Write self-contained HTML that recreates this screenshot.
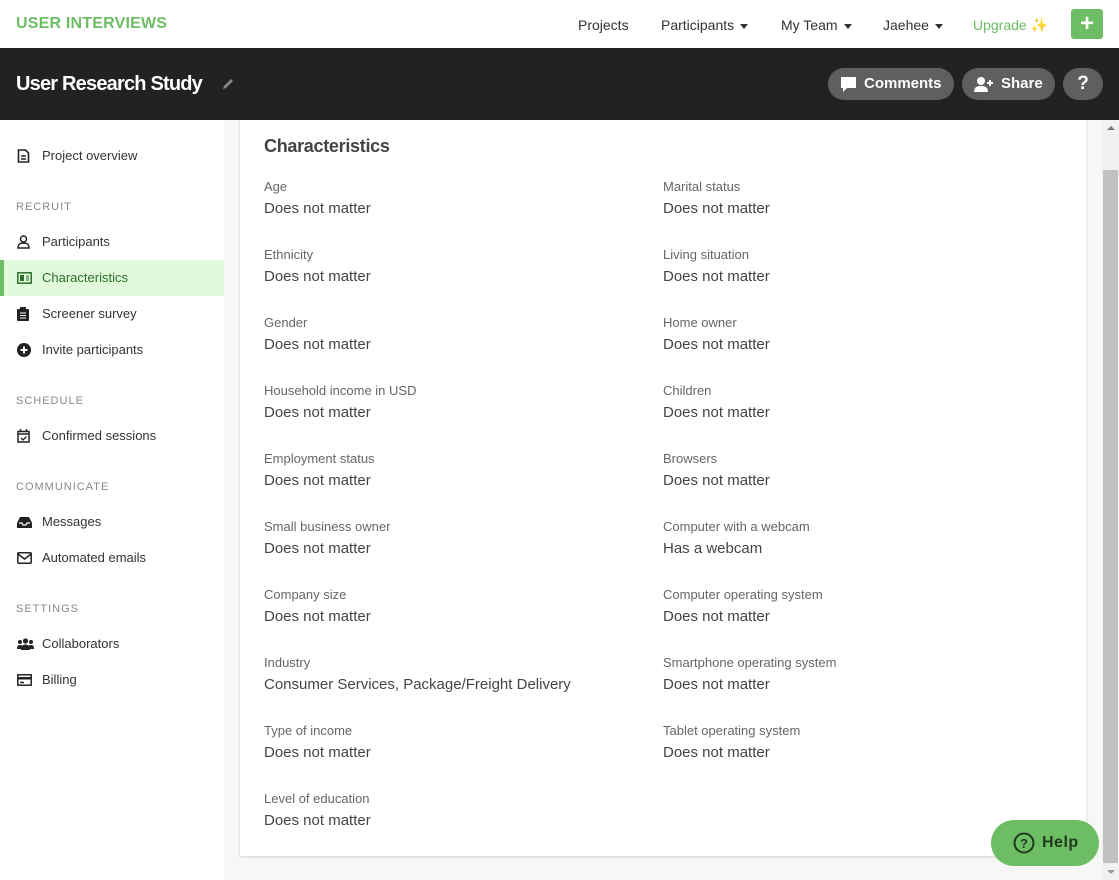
<!DOCTYPE html>
<html><head><meta charset="utf-8"><style>
*{margin:0;padding:0;box-sizing:border-box}
body{width:1119px;height:880px;overflow:hidden;background:#f7f7f7;font-family:"Liberation Sans",sans-serif;position:relative;color:#333}
.a{position:absolute;white-space:nowrap}
#top{position:absolute;left:0;top:0;width:1119px;height:48px;background:#fff}
#bar{position:absolute;left:0;top:48px;width:1119px;height:72px;background:#222}
#side{position:absolute;left:0;top:120px;width:224px;height:760px;background:#fff}
.nav{font-size:14px;color:#333;top:17px}
.caret{display:inline-block;width:0;height:0;border-left:4px solid transparent;border-right:4px solid transparent;border-top:5px solid #333;vertical-align:middle;margin-left:6px}
.btn{position:absolute;top:68px;height:32px;border-radius:16px;background:#5f5f5f;color:#fff;font-weight:bold;font-size:15px;line-height:32px}
.si{font-size:13px;color:#333;left:42px}
.sh{font-size:11px;color:#888;letter-spacing:1px;left:16px}
.ic{position:absolute;left:17px}
#card{position:absolute;left:240px;top:100px;width:846px;height:756px;background:#fff;box-shadow:0 1px 3px rgba(0,0,0,.15)}
.l{font-size:13px;color:#666}
.v{font-size:15px;color:#444}
</style></head><body>
<div id="card"></div>
<div id="top"></div>
<div class="a" style="left:16px;top:15px;font-size:16px;font-weight:bold;color:#6cbd64;letter-spacing:.2px">USER INTERVIEWS</div>
<div class="a nav" style="left:578px">Projects</div>
<div class="a nav" style="left:661px">Participants<span class="caret"></span></div>
<div class="a nav" style="left:781px">My Team<span class="caret"></span></div>
<div class="a nav" style="left:883px">Jaehee<span class="caret"></span></div>
<div class="a nav" style="left:973px;color:#6cbd64">Upgrade <span style="color:#e6c000">✨</span></div>
<div class="a" style="left:1071px;top:9px;width:32px;height:30px;background:#6cbd64;border-radius:3px;color:#fff;font-size:24px;font-weight:bold;text-align:center;line-height:29px">+</div>

<div id="bar"></div>
<div class="a" style="left:16px;top:73px;font-size:20px;font-weight:bold;color:#fff;letter-spacing:-.8px">User Research Study</div>
<svg class="a" style="left:221px;top:77px" width="14" height="14" viewBox="0 0 14 14"><path d="M2 12l1-3 7-7 2 2-7 7z" fill="#888"/></svg>
<div class="btn" style="left:828px;width:126px"><svg style="position:absolute;left:12px;top:8px" width="17" height="17" viewBox="0 0 17 17"><path d="M1 1h15v11H7l-4 4v-4H1z" fill="#fff"/></svg><span style="position:absolute;left:36px">Comments</span></div>
<div class="btn" style="left:962px;width:93px"><svg style="position:absolute;left:12px;top:8px" width="20" height="17" viewBox="0 0 20 17"><circle cx="7" cy="5" r="4" fill="#fff"/><path d="M0 16c0-5 3-6 7-6s7 1 7 6z" fill="#fff"/><path d="M16 4v6M13 7h6" stroke="#fff" stroke-width="2"/></svg><span style="position:absolute;left:39px">Share</span></div>
<div class="btn" style="left:1063px;width:40px;text-align:center;font-size:19px">?</div>

<div id="side"></div>
<div class="a" style="left:0;top:260px;width:224px;height:36px;background:#e0fadb;border-left:4px solid #6cbd64"></div>
<svg class="ic" style="top:149px" width="13" height="14" viewBox="0 0 13 14"><path d="M1.5 1h7l3 3v9h-10z" fill="none" stroke="#222" stroke-width="1.6"/><path d="M4 7h5M4 10h5" stroke="#222" stroke-width="1.4"/></svg>
<div class="a si" style="top:148px">Project overview</div>
<div class="a sh" style="top:201px">RECRUIT</div>
<svg class="ic" style="top:235px" width="13" height="14" viewBox="0 0 13 14"><circle cx="6.5" cy="4" r="3" fill="none" stroke="#222" stroke-width="1.5"/><path d="M1 13c0-4 2-5 5.5-5s5.5 1 5.5 5z" fill="none" stroke="#222" stroke-width="1.5"/></svg>
<div class="a si" style="top:234px">Participants</div>
<svg class="ic" style="top:272px" width="15" height="12" viewBox="0 0 15 12"><rect x=".8" y=".8" width="13.4" height="10.4" fill="none" stroke="#2d6e28" stroke-width="1.5"/><rect x="3" y="3" width="4" height="6" fill="#2d6e28"/><path d="M9 4h3M9 6h3M9 8h3" stroke="#2d6e28"/></svg>
<div class="a si" style="top:270px;color:#2d6e28">Characteristics</div>
<svg class="ic" style="top:307px" width="12" height="14" viewBox="0 0 12 14"><rect x="0" y="2" width="12" height="12" rx="1" fill="#222"/><rect x="3" y="0" width="6" height="3" fill="#222"/><path d="M3 6h6M3 8.5h6M3 11h6" stroke="#fff"/></svg>
<div class="a si" style="top:306px">Screener survey</div>
<svg class="ic" style="top:343px" width="14" height="14" viewBox="0 0 14 14"><circle cx="7" cy="7" r="7" fill="#222"/><path d="M7 3.5v7M3.5 7h7" stroke="#fff" stroke-width="2"/></svg>
<div class="a si" style="top:342px">Invite participants</div>
<div class="a sh" style="top:395px">SCHEDULE</div>
<svg class="ic" style="top:429px" width="13" height="14" viewBox="0 0 13 14"><rect x="1" y="2.5" width="11" height="10.5" fill="none" stroke="#222" stroke-width="1.5"/><path d="M1 5h11M3.5 0v3M9.5 0v3" stroke="#222" stroke-width="1.5"/><path d="M4 9l2 2 3.5-3.5" fill="none" stroke="#222" stroke-width="1.3"/></svg>
<div class="a si" style="top:428px">Confirmed sessions</div>
<div class="a sh" style="top:481px">COMMUNICATE</div>
<svg class="ic" style="top:516px" width="15" height="12" viewBox="0 0 15 12"><path d="M0 7l3-6h9l3 6v5H0z" fill="#222"/><path d="M2 7h3l1 2h3l1-2h3" fill="none" stroke="#fff" stroke-width="1.2"/></svg>
<div class="a si" style="top:514px">Messages</div>
<svg class="ic" style="top:552px" width="15" height="12" viewBox="0 0 15 12"><rect x=".8" y=".8" width="13.4" height="10.4" rx="1" fill="none" stroke="#222" stroke-width="1.5"/><path d="M1 2l6.5 5L14 2" fill="none" stroke="#222" stroke-width="1.5"/></svg>
<div class="a si" style="top:550px">Automated emails</div>
<div class="a sh" style="top:603px">SETTINGS</div>
<svg class="ic" style="top:638px" width="17" height="12" viewBox="0 0 17 12"><circle cx="8.5" cy="3" r="2.6" fill="#222"/><circle cx="3" cy="4" r="2" fill="#222"/><circle cx="14" cy="4" r="2" fill="#222"/><path d="M4 12c0-4 2-5.5 4.5-5.5S13 8 13 12z M0 11c0-3 1-4 3-4s3 1 3 4z M11 11c0-3 1-4 3-4s3 1 3 4z" fill="#222"/></svg>
<div class="a si" style="top:636px">Collaborators</div>
<svg class="ic" style="top:674px" width="15" height="12" viewBox="0 0 15 12"><rect x=".8" y=".8" width="13.4" height="10.4" fill="none" stroke="#222" stroke-width="1.5"/><rect x="1" y="3" width="13" height="2.5" fill="#222"/><path d="M3 8.5h4" stroke="#222" stroke-width="1.5"/></svg>
<div class="a si" style="top:672px">Billing</div>

<div class="a" style="left:264px;top:136px;font-size:18px;font-weight:bold;color:#444;letter-spacing:-.3px">Characteristics</div>

<div class="a l" style="left:264px;top:179px">Age</div><div class="a v" style="left:264px;top:200px">Does not matter</div>
<div class="a l" style="left:264px;top:247px">Ethnicity</div><div class="a v" style="left:264px;top:268px">Does not matter</div>
<div class="a l" style="left:264px;top:315px">Gender</div><div class="a v" style="left:264px;top:336px">Does not matter</div>
<div class="a l" style="left:264px;top:383px">Household income in USD</div><div class="a v" style="left:264px;top:404px">Does not matter</div>
<div class="a l" style="left:264px;top:451px">Employment status</div><div class="a v" style="left:264px;top:472px">Does not matter</div>
<div class="a l" style="left:264px;top:519px">Small business owner</div><div class="a v" style="left:264px;top:540px">Does not matter</div>
<div class="a l" style="left:264px;top:587px">Company size</div><div class="a v" style="left:264px;top:608px">Does not matter</div>
<div class="a l" style="left:264px;top:655px">Industry</div><div class="a v" style="left:264px;top:676px">Consumer Services, Package/Freight Delivery</div>
<div class="a l" style="left:264px;top:723px">Type of income</div><div class="a v" style="left:264px;top:744px">Does not matter</div>
<div class="a l" style="left:264px;top:791px">Level of education</div><div class="a v" style="left:264px;top:812px">Does not matter</div>

<div class="a l" style="left:663px;top:179px">Marital status</div><div class="a v" style="left:663px;top:200px">Does not matter</div>
<div class="a l" style="left:663px;top:247px">Living situation</div><div class="a v" style="left:663px;top:268px">Does not matter</div>
<div class="a l" style="left:663px;top:315px">Home owner</div><div class="a v" style="left:663px;top:336px">Does not matter</div>
<div class="a l" style="left:663px;top:383px">Children</div><div class="a v" style="left:663px;top:404px">Does not matter</div>
<div class="a l" style="left:663px;top:451px">Browsers</div><div class="a v" style="left:663px;top:472px">Does not matter</div>
<div class="a l" style="left:663px;top:519px">Computer with a webcam</div><div class="a v" style="left:663px;top:540px">Has a webcam</div>
<div class="a l" style="left:663px;top:587px">Computer operating system</div><div class="a v" style="left:663px;top:608px">Does not matter</div>
<div class="a l" style="left:663px;top:655px">Smartphone operating system</div><div class="a v" style="left:663px;top:676px">Does not matter</div>
<div class="a l" style="left:663px;top:723px">Tablet operating system</div><div class="a v" style="left:663px;top:744px">Does not matter</div>

<div class="a" style="left:1102px;top:120px;width:17px;height:760px;background:#f1f1f1"></div>
<div class="a" style="left:1103px;top:170px;width:15px;height:693px;background:#c1c1c1"></div>
<div class="a" style="left:1107px;top:126px;border-left:4px solid transparent;border-right:4px solid transparent;border-bottom:4px solid #777"></div>
<div class="a" style="left:1107px;top:870px;border-left:4px solid transparent;border-right:4px solid transparent;border-top:4px solid #999"></div>

<div class="a" style="left:991px;top:820px;width:108px;height:46px;border-radius:23px;background:#6cbd64"></div>
<svg class="a" style="left:1013px;top:832px" width="22" height="22" viewBox="0 0 22 22"><circle cx="11" cy="11" r="9.5" fill="none" stroke="#1e3a1c" stroke-width="2"/><text x="11" y="16" text-anchor="middle" font-family="Liberation Sans" font-weight="bold" font-size="13" fill="#1e3a1c">?</text></svg>
<div class="a" style="left:1042px;top:834px;font-size:16px;font-weight:bold;color:#1e3a1c;letter-spacing:.5px">Help</div>
</body></html>
